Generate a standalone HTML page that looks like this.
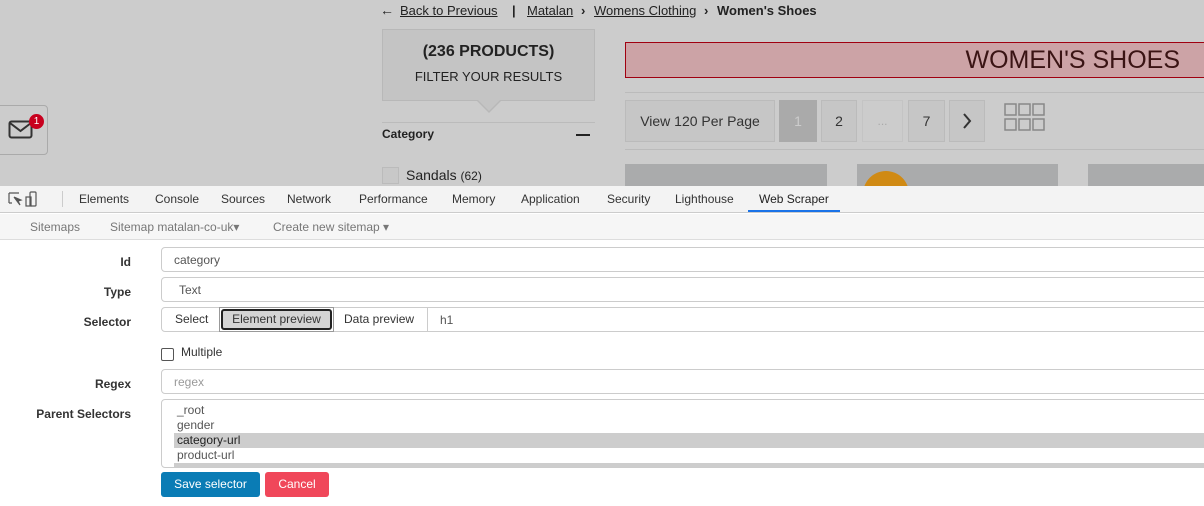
<!DOCTYPE html>
<html><head><style>
*{box-sizing:border-box;margin:0;padding:0}
body{width:1204px;height:506px;overflow:hidden;background:#fff;font-family:"Liberation Sans",sans-serif;position:relative}
.a{position:absolute}
.top{left:0;top:0;width:1204px;height:186px;background:#cccccc;overflow:hidden}
.bc{top:3px;font-size:13px;color:#222;white-space:nowrap}
.bc u{color:#222}
.tab{top:192px;font-size:12px;color:#333}
.lbl{font-size:12px;font-weight:bold;color:#333;right:1073px;text-align:right}
.inp{left:161px;width:1060px;height:25px;border:1px solid #ccc;border-radius:4px;background:#fff;font-size:12px;color:#555;padding:5px 12px}
</style></head><body>
<div class="a top">
 <div class="a bc" style="left:380px;top:2px;font-weight:bold;font-size:14px">&#8592;</div>
 <div class="a bc" style="left:400px"><u>Back to Previous</u></div>
 <div class="a bc" style="left:512px;font-weight:bold">|</div>
 <div class="a bc" style="left:527px"><u>Matalan</u></div>
 <div class="a bc" style="left:581px;font-weight:bold">&#8250;</div>
 <div class="a bc" style="left:594px"><u>Womens Clothing</u></div>
 <div class="a bc" style="left:704px;font-weight:bold">&#8250;</div>
 <div class="a bc" style="left:717px;font-weight:bold">Women's Shoes</div>

 <div class="a" style="left:382px;top:29px;width:213px;height:72px;background:#c4c4c4;border:1px solid #b8b8b8"></div>
 <div class="a" style="left:476px;top:100px;width:0;height:0;border-left:13px solid transparent;border-right:13px solid transparent;border-top:13px solid #b8b8b8"></div>
 <div class="a" style="left:477px;top:99px;width:0;height:0;border-left:12px solid transparent;border-right:12px solid transparent;border-top:12px solid #c4c4c4"></div>
 <div class="a" style="left:382px;top:43px;width:213px;text-align:center;font-weight:bold;font-size:16px;color:#222">(236 PRODUCTS)</div>
 <div class="a" style="left:382px;top:69px;width:213px;text-align:center;font-size:13px;color:#222">FILTER YOUR RESULTS</div>
 <div class="a" style="left:382px;top:122px;width:213px;height:1px;background:#bbb"></div>
 <div class="a" style="left:382px;top:127px;font-size:12px;font-weight:bold;color:#222">Category</div>
 <div class="a" style="left:576px;top:134px;width:14px;height:2px;background:#222"></div>
 <div class="a" style="left:382px;top:167px;width:17px;height:17px;border:1px solid #bbb;background:#c8c8c8"></div>
 <div class="a" style="left:406px;top:167px;font-size:14px;color:#222">Sandals <span style="font-size:12px">(62)</span></div>

 <div class="a" style="left:-6px;top:105px;width:54px;height:50px;border:1px solid #aaa;border-radius:4px"></div>
 <svg class="a" style="left:8px;top:119px" width="26" height="22"><rect x="1.5" y="2.5" width="22" height="16" rx="2" fill="none" stroke="#333" stroke-width="2"/><path d="M2 4 L12.5 12 L23 4" fill="none" stroke="#333" stroke-width="2"/></svg>
 <div class="a" style="left:29px;top:114px;width:15px;height:15px;border-radius:50%;background:#c8001e;color:#fff;font-size:10px;text-align:center;line-height:15px">1</div>

 <div class="a" style="left:625px;top:42px;width:590px;height:36px;background:#cca3a6;border:1px solid #a00010"></div>
 <div class="a" style="left:900px;top:46px;width:280px;text-align:right;font-size:25px;color:#3a1414">WOMEN'S SHOES</div>
 <div class="a" style="left:625px;top:92px;width:600px;height:1px;background:#bbb"></div>
 <div class="a" style="left:625px;top:100px;width:150px;height:42px;border:1px solid #bbb;background:#c6c6c6;font-size:14px;color:#333;text-align:center;line-height:40px">View 120 Per Page</div>
 <div class="a" style="left:779px;top:100px;width:38px;height:42px;background:#aaa;font-size:14px;color:#ccc;text-align:center;line-height:42px">1</div>
 <div class="a" style="left:821px;top:100px;width:36px;height:42px;border:1px solid #bbb;background:#c6c6c6;font-size:14px;color:#333;text-align:center;line-height:40px">2</div>
 <div class="a" style="left:862px;top:100px;width:41px;height:42px;border:1px solid #c4c4c4;font-size:12px;color:#aaa;text-align:center;line-height:40px">...</div>
 <div class="a" style="left:908px;top:100px;width:37px;height:42px;border:1px solid #bbb;background:#c6c6c6;font-size:14px;color:#333;text-align:center;line-height:40px">7</div>
 <div class="a" style="left:949px;top:100px;width:36px;height:42px;border:1px solid #bbb;background:#c6c6c6"></div>
 <svg class="a" style="left:960px;top:112px" width="14" height="18"><path d="M4 2 L10 9 L4 16" fill="none" stroke="#333" stroke-width="2"/></svg>
 <svg class="a" style="left:1004px;top:103px" width="42" height="30" fill="none" stroke="#888" stroke-width="1.5"><rect x="1" y="1" width="11" height="11"/><rect x="15" y="1" width="11" height="11"/><rect x="29" y="1" width="11" height="11"/><rect x="1" y="16" width="11" height="11"/><rect x="15" y="16" width="11" height="11"/><rect x="29" y="16" width="11" height="11"/></svg>
 <div class="a" style="left:625px;top:149px;width:600px;height:1px;background:#bbb"></div>
 <div class="a" style="left:625px;top:164px;width:202px;height:30px;background:#aaabac"></div>
 <div class="a" style="left:857px;top:164px;width:201px;height:30px;background:#aaabac"></div>
 <div class="a" style="left:1088px;top:164px;width:130px;height:30px;background:#aaabac"></div>
 <div class="a" style="left:863px;top:171px;width:46px;height:46px;border-radius:50%;background:#d08a14"></div>
</div>

<div class="a" style="left:0;top:186px;width:1204px;height:27px;background:#f3f3f3;border-bottom:1px solid #ccc"></div>
<svg class="a" style="left:7px;top:191px" width="30" height="17" fill="none" stroke="#555" stroke-width="1.2"><path d="M2 2 H12 M2 2 V12 M2 12 H5"/><path d="M7 6 L14 9 L11 10 L13 14 L7 6" fill="#555"/><rect x="23" y="1" width="6" height="14" rx="1"/><rect x="19" y="6" width="5" height="9"/></svg>
<div class="a" style="left:62px;top:191px;width:1px;height:16px;background:#ccc"></div>
<div class="a tab" style="left:79px">Elements</div>
<div class="a tab" style="left:155px">Console</div>
<div class="a tab" style="left:221px">Sources</div>
<div class="a tab" style="left:287px">Network</div>
<div class="a tab" style="left:359px">Performance</div>
<div class="a tab" style="left:452px">Memory</div>
<div class="a tab" style="left:521px">Application</div>
<div class="a tab" style="left:607px">Security</div>
<div class="a tab" style="left:675px">Lighthouse</div>
<div class="a tab" style="left:759px;color:#222">Web Scraper</div>
<div class="a" style="left:748px;top:210px;width:92px;height:2px;background:#1a73e8"></div>

<div class="a" style="left:0;top:214px;width:1204px;height:26px;background:#f6f6f6;border-bottom:1px solid #ddd"></div>
<div class="a" style="left:30px;top:220px;font-size:12px;color:#777">Sitemaps</div>
<div class="a" style="left:110px;top:220px;font-size:12px;color:#777">Sitemap matalan-co-uk&#9662;</div>
<div class="a" style="left:273px;top:220px;font-size:12px;color:#777">Create new sitemap &#9662;</div>

<div class="a lbl" style="top:255px">Id</div>
<div class="a inp" style="top:247px">category</div>
<div class="a lbl" style="top:285px">Type</div>
<div class="a inp" style="top:277px;padding-left:17px">Text</div>
<div class="a lbl" style="top:315px">Selector</div>
<div class="a inp" style="top:307px;padding:0"></div>
<div class="a" style="left:175px;top:312px;font-size:12px;color:#333">Select</div>
<div class="a" style="left:219px;top:307px;width:115px;height:25px;border:1px solid #999"></div>
<div class="a" style="left:221px;top:309px;width:111px;height:21px;border:2px solid #222;border-radius:3px;background:#d4d4d4;font-size:12px;color:#333;text-align:center;line-height:17px">Element preview</div>
<div class="a" style="left:344px;top:312px;font-size:12px;color:#333">Data preview</div>
<div class="a" style="left:427px;top:308px;width:1px;height:23px;background:#ccc"></div>
<div class="a" style="left:440px;top:313px;font-size:12px;color:#555">h1</div>
<div class="a" style="left:161px;top:348px;width:13px;height:13px;border:1px solid #555;border-radius:2px;background:#fff"></div>
<div class="a" style="left:181px;top:345px;font-size:12px;color:#333">Multiple</div>
<div class="a lbl" style="top:377px">Regex</div>
<div class="a inp" style="top:369px;color:#999">regex</div>
<div class="a lbl" style="top:407px">Parent Selectors</div>
<div class="a inp" style="top:399px;height:69px;padding:0;overflow:hidden">
 <div style="position:absolute;left:12px;top:33px;width:1100px;height:15px;background:#cdcdcd"></div>
 <div style="position:absolute;left:12px;top:63px;width:1100px;height:10px;background:#cdcdcd"></div>
 <div style="position:absolute;left:15px;top:3px;font-size:12px;line-height:15px;color:#555">_root<br>gender<br><span style="color:#222">category-url</span><br>product-url</div>
</div>
<div class="a" style="left:161px;top:472px;width:99px;height:25px;background:#0a7cb5;border-radius:3px;color:#fff;font-size:12px;text-align:center;line-height:24px">Save selector</div>
<div class="a" style="left:265px;top:472px;width:64px;height:25px;background:#f0475a;border-radius:3px;color:#fff;font-size:12px;text-align:center;line-height:24px">Cancel</div>
</body></html>
